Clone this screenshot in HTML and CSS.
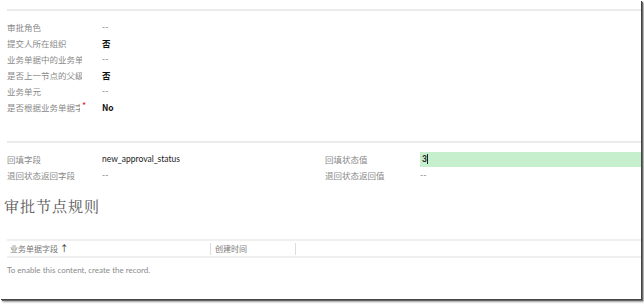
FILE: index.html
```html
<!DOCTYPE html>
<html>
<head>
<meta charset="utf-8">
<link rel="stylesheet" href="styles.css">
</head>
<body>
<div class="frame">
  <div class="rule top-rule"></div>
  <div class="section first">
    <div class="row"><div class="label">审批角色</div><div class="value dash">--</div></div>
    <div class="row"><div class="label">提交人所在组织</div><div class="value bold">否</div></div>
    <div class="row"><div class="label">业务单据中的业务单元字段</div><div class="value dash">--</div></div>
    <div class="row"><div class="label">是否上一节点的父级业务单元</div><div class="value bold">否</div></div>
    <div class="row"><div class="label">业务单元</div><div class="value dash">--</div></div>
    <div class="row"><div class="label req"><span class="ltext">是否根据业务单据字段</span><span class="star">*</span></div><div class="value bold">No</div></div>
  </div>
  <div class="rule mid-rule"></div>
  <div class="section second">
    <div class="grid2">
      <div class="row"><div class="label">回填字段</div><div class="value">new_approval_status</div></div>
      <div class="row right"><div class="label">回填状态值</div><div class="value green"><span class="caret">3</span></div></div>
      <div class="row"><div class="label">退回状态返回字段</div><div class="value dash">--</div></div>
      <div class="row right"><div class="label">退回状态返回值</div><div class="value dash">--</div></div>
    </div>
  </div>
  <h2 class="heading">审批节点规则</h2>
  <div class="table">
    <div class="thead">
      <div class="th col1">业务单据字段 <span class="arrow">↑</span></div>
      <div class="th col2">创建时间</div>
      <div class="th col3"></div>
    </div>
    <div class="empty">To enable this content, create the record.</div>
  </div>
</div>
</body>
</html>
```
FILE: styles.css
```css
html, body { margin: 0; padding: 0; background: #fff; }
body { width: 644px; height: 305px; overflow: hidden; font-family: "Noto Sans CJK SC", "Open Sans", sans-serif; }
.frame {
  width: 641px; height: 299px; background: #fff; position: relative;
  box-shadow: 1px 1px 0 #444, 2px 2px 1px #666, 3px 3px 2px #aaa;
  box-sizing: border-box; padding-left: 7px;
  display: flex; flex-direction: column;
}
.rule { height: 2px; background: #ebebeb; }
.top-rule { margin-top: 9px; }
.section.first { padding-top: 8px; }
.row { display: flex; height: 16px; align-items: center; }
.label { width: 95px; font-size: 8.5px; color: #8a8a8a; white-space: nowrap; overflow: hidden; text-overflow: clip; }
.label:not(.req) { max-width: 75px; margin-right: 20px; }
.label.req { display: flex; align-items: flex-start; width: 95px; }
.ltext { width: 73px; overflow: hidden; display: block; }
.star { color: #e81123; font-size: 9px; margin-left: 2px; line-height: 10px; }
.value { font-size: 8.5px; color: #222; font-family: "Lato", "Noto Sans CJK SC", sans-serif; }
.value.dash { color: #888; }
.value.bold { font-weight: bold; font-family: "Noto Sans CJK SC", sans-serif; color: #111; }
.mid-rule { margin-top: 26px; }
.section.second { padding-top: 8px; }
.grid2 { display: grid; grid-template-columns: 318px 1fr; }
.row.right .label { max-width: 95px; width: 95px; margin-right: 0; }
.value.green { background: #c6efcd; flex: 1; height: 15px; display: flex; align-items: center; padding-left: 2px; }
.caret { border-right: 1px solid #222; font-weight: bold; line-height: 10px; }
.heading { margin: 12px 0 0 -3px; font-family: "Noto Serif CJK SC", "Noto Sans CJK SC", serif; font-weight: normal; font-size: 15px; color: #555; letter-spacing: 1px; height: 22px; line-height: 22px; }
.table { margin-top: 22px; }
.thead { display: flex; height: 15px; border-top: 2px solid #f0f0f0; border-bottom: 2px solid #f0f0f0; align-items: center; }
.th { font-size: 8px; color: #777; height: 12px; line-height: 12px; }
.col1 { width: 200px; padding-left: 3px; }
.col2 { width: 80px; border-left: 1px solid #ddd; padding-left: 4px; }
.col3 { border-left: 1px solid #ddd; }
.arrow { color: #333; font-size: 9px; }
.empty { font-size: 8px; color: #8a8a8a; margin-top: 7px; font-family: "Lato", sans-serif; }
```
